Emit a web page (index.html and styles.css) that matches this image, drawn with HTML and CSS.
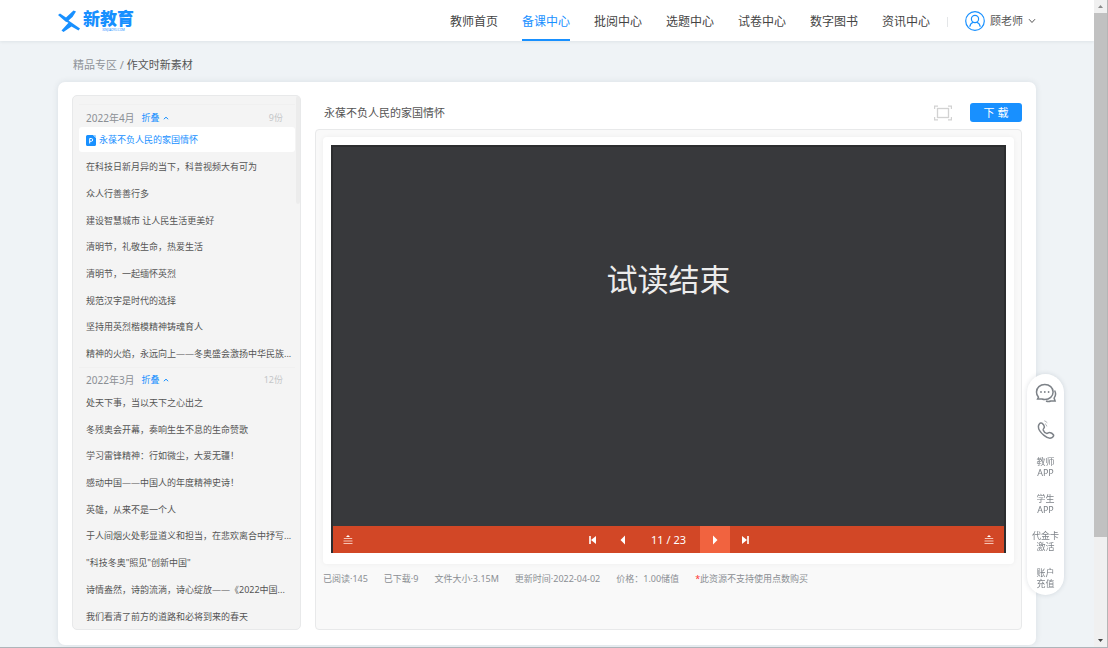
FILE: index.html
```html
<!DOCTYPE html>
<html lang="zh-CN">
<head>
<meta charset="utf-8">
<title>作文时新素材</title>
<link rel="stylesheet" href="styles.css">
</head>
<body>
<div class="page">
  <header class="topbar">
    <a class="logo" href="#">
      <svg class="logo-mark" viewBox="0 0 22 22" aria-hidden="true"><path d="M0 5 2 3.500 8 7.500 15.500.500 18 1.500 14.500 7 10.500 10.500 22 18.500 20.500 20.500 13.500 16.500 5.500 22 3.500 20.500 10.500 12.800 7.500 11.500z" fill="#1890ff"/></svg>
      <span class="logo-text"><b>新教育</b><small>XINJIAOYU.COM</small></span>
    </a>
    <nav class="nav">
      <a href="#">教师首页</a>
      <a href="#" class="active">备课中心</a>
      <a href="#">批阅中心</a>
      <a href="#">选题中心</a>
      <a href="#">试卷中心</a>
      <a href="#">数字图书</a>
      <a href="#">资讯中心</a>
    </nav>
    <button class="user" type="button">
      <svg class="avatar" viewBox="0 0 20 20" aria-hidden="true"><g fill="none" stroke="#1890ff" stroke-width="1.200"><circle cx="10" cy="10" r="9.300"/><circle cx="10" cy="8" r="3.600"/><path d="M4.800 15.800c.3-2.500 1.700-4 3.400-4.600M15.200 15.800c-.3-2.500-1.700-4-3.400-4.600"/></g></svg>
      <span>顾老师</span>
      <svg class="chevron" viewBox="0 0 8 6" aria-hidden="true"><path d="M1 1.200 4 4.500 7 1.200" fill="none" stroke="#555"/></svg>
    </button>
  </header>

  <div class="breadcrumb"><a href="#">精品专区</a> / <span>作文时新素材</span></div>

  <main class="card">
    <aside class="sidebar">
      <div class="group-head"><h2>2022年4月</h2><button type="button">折叠<svg viewBox="0 0 6 4" aria-hidden="true"><path d="M.8 3.200 3 1.200 5.200 3.200" fill="none" stroke="#1890ff"/></svg></button><span>9份</span></div>
      <ul class="docs">
        <li><a href="#" class="current"><svg viewBox="0 0 10 11" aria-hidden="true"><path d="M1.500 0H7l3 3v6.500A1.500 1.500 0 0 1 8.500 11h-7A1.500 1.500 0 0 1 0 9.500v-8A1.500 1.500 0 0 1 1.500 0z" fill="#1890ff"/><path d="M7.500 0 10 2.500V1.200Q10 0 8.800 0z" fill="#8cc8ff"/><path d="M3.700 8.500V3.500H5.300a1.400 1.400 0 0 1 0 2.800H3.700" fill="none" stroke="#fff"/></svg>永葆不负人民的家国情怀</a></li>
        <li><a href="#">在科技日新月异的当下，科普视频大有可为</a></li>
        <li><a href="#">众人行善善行多</a></li>
        <li><a href="#">建设智慧城市 让人民生活更美好</a></li>
        <li><a href="#">清明节，礼敬生命，热爱生活</a></li>
        <li><a href="#">清明节，一起缅怀英烈</a></li>
        <li><a href="#">规范汉字是时代的选择</a></li>
        <li><a href="#">坚持用英烈楷模精神铸魂育人</a></li>
        <li><a href="#">精神的火焰，永远向上——冬奥盛会激扬中华民族...</a></li>
      </ul>
      <div class="group-head"><h2>2022年3月</h2><button type="button">折叠<svg viewBox="0 0 6 4" aria-hidden="true"><path d="M.8 3.200 3 1.200 5.200 3.200" fill="none" stroke="#1890ff"/></svg></button><span>12份</span></div>
      <ul class="docs">
        <li><a href="#">处天下事，当以天下之心出之</a></li>
        <li><a href="#">冬残奥会开幕，奏响生生不息的生命赞歌</a></li>
        <li><a href="#">学习雷锋精神：行如微尘，大爱无疆！</a></li>
        <li><a href="#">感动中国——中国人的年度精神史诗！</a></li>
        <li><a href="#">英雄，从来不是一个人</a></li>
        <li><a href="#">于人间烟火处彰显道义和担当，在悲欢离合中抒写...</a></li>
        <li><a href="#">"科技冬奥"照见"创新中国"</a></li>
        <li><a href="#">诗情盎然，诗韵流淌，诗心绽放——《2022中国...</a></li>
        <li><a href="#">我们看清了前方的道路和必将到来的春天</a></li>
      </ul>
    </aside>

    <section class="content">
      <div class="content-head">
        <h1>永葆不负人民的家国情怀</h1>
        <button class="fullscreen" type="button" aria-label="全屏"><svg viewBox="0 0 18 16"><g fill="none" stroke="#d2d2d2"><rect x="3.500" y="3.500" width="11" height="9" stroke-width="1.300"/><path d="M.6 4V1.100H4M14 1.100h3.400V4M17.400 12v2.900H14M4 14.900H.6V12" stroke-width="1.200"/></g></svg></button>
        <button class="download" type="button">下 载</button>
      </div>
      <div class="panel">
        <div class="stage">
          <div class="viewer">
            <div class="slide">试读结束</div>
            <div class="controls">
              <button type="button" aria-label="目录"><svg viewBox="0 0 10 10"><path d="M5 0 7 2H3z" fill="#fff"/><path d="M.8 3.500h8.400M.5 6h9M.5 8.500h9" stroke="#f6c3b4" stroke-width="1.200"/></svg></button>
              <div class="pager">
                <button type="button" aria-label="首页"><svg viewBox="0 0 10 10"><path d="M2 1v8" stroke="#fff" stroke-width="1.600"/><path d="M8 1v8L3 5z" fill="#fff"/></svg></button>
                <button type="button" aria-label="上一页"><svg viewBox="0 0 10 10"><path d="M7 .500v9L2.500 5z" fill="#fff"/></svg></button>
                <span class="count">11 / 23</span>
                <button type="button" class="lit" aria-label="下一页"><svg viewBox="0 0 10 10"><path d="M3 .500v9L7.500 5z" fill="#fff"/></svg></button>
                <button type="button" aria-label="末页"><svg viewBox="0 0 10 10"><path d="M8 1v8" stroke="#fff" stroke-width="1.600"/><path d="M2 1v8l5-4z" fill="#fff"/></svg></button>
              </div>
              <button type="button" aria-label="菜单"><svg viewBox="0 0 10 10"><path d="M5 0 7 2H3z" fill="#fff"/><path d="M.8 3.500h8.400M.5 6h9M.5 8.500h9" stroke="#f6c3b4" stroke-width="1.200"/></svg></button>
            </div>
          </div>
        </div>
        <div class="meta">
          <span>已阅读·145</span><span>已下载·9</span><span>文件大小·3.15M</span><span>更新时间·2022-04-02</span><span>价格：1.00储值</span><span><em>*</em>此资源不支持使用点数购买</span>
        </div>
      </div>
    </section>
  </main>
</div>

<div class="scrollbar" aria-hidden="true">
  <svg viewBox="0 0 13 13"><path d="M6.500 5 9 8H4z" fill="#8a8a8a"/></svg>
  <div class="thumb"></div>
  <svg viewBox="0 0 13 13"><path d="M4 5h5L6.500 8z" fill="#444"/></svg>
</div>

<div class="tools">
  <button type="button" aria-label="在线咨询"><svg viewBox="0 0 22 22"><g fill="none" stroke="#7d8288" stroke-width="1.500"><path d="M3.500 15.200A7.600 7.200 0 0 1 1.500 10C1.500 5.700 5.100 2.500 9.800 2.500s8.300 3.200 8.300 7.500-3.600 7.500-8.300 7.500c-1 0-2-.2-2.900-.5H2.600z"/><path d="M19.600 8.500c1.400 2.600 1.200 5.400-.5 7.600l1 2.900h-4.300c-1.500.6-3.300.6-4.800 0"/></g><g fill="#7d8288"><circle cx="6" cy="10" r=".9"/><circle cx="9.800" cy="10" r=".9"/><circle cx="13.600" cy="10" r=".9"/></g></svg></button>
  <button type="button" aria-label="电话"><svg viewBox="0 0 22 22"><g fill="none" stroke="#7d8288" stroke-width="1.500"><path d="M4.200 5.200C5 4 6.300 3.600 7.300 4.300 8.600 5.300 9.300 6.800 9.400 8c0 1.200-1.500 1.700-1.200 2.900.5 1.500 2 3 3.500 3.500 1.200.3 1.800-1.200 3-1 1.400.2 2.900 1.200 3.700 2.300.6 1-.3 2.200-1.400 2.900-1.800 1.100-5 .3-8-2.200S3.300 10.200 3.400 7.600c0-.9.300-1.700.8-2.400z"/><path d="M10 4.600c1 .6 1.600 1.600 1.800 2.800M9.300 1.800c1.200.4 2.200 1.100 3 2" stroke="#b0b4b8" stroke-width="1"/></g></svg></button>
  <button type="button">教师<br>APP</button>
  <button type="button">学生<br>APP</button>
  <button type="button">代金卡<br>激活</button>
  <button type="button">账户<br>充值</button>
</div>
</body>
</html>
```
FILE: styles.css
```css
* { box-sizing: border-box; }
body {
  margin: 0;
  display: flex;
  min-height: 100vh;
  background: #eff3f6;
  border-bottom: 1px solid #aeb5ba;
  color: #555;
  font: 11px/16px "Noto Sans", "Noto Sans CJK SC", sans-serif;
}
a { color: inherit; text-decoration: none; }
button { font: inherit; color: inherit; background: none; border: 0; padding: 0; cursor: pointer; }
h1, h2, ul { margin: 0; padding: 0; font-weight: 400; list-style: none; }
svg { display: block; }

.page { flex: 1; min-width: 0; display: flex; flex-direction: column; }

.topbar {
  height: 41px;
  padding: 0 58px;
  display: flex;
  align-items: center;
  background: #fff;
  box-shadow: 0 1px 3px rgba(30, 50, 70, .08);
}
.logo { display: flex; align-items: center; gap: 3px; margin-right: auto; }
.logo-mark { width: 22px; height: 22px; }
.logo-text { display: flex; flex-direction: column; align-items: center; color: #1890ff; }
.logo-text b { font-size: 17px; line-height: 18px; font-weight: 900; }
.logo-text small { font-size: 3px; line-height: 4px; padding-left: 10px; }
.nav { display: flex; align-self: stretch; gap: 24px; font-size: 12px; color: #444; }
.nav a { display: flex; align-items: center; padding-top: 4px; border-bottom: 2px solid transparent; }
.nav .active { color: #1890ff; border-color: #1890ff; }
.user { display: flex; align-items: center; gap: 5px; margin-left: 17px; position: relative; padding-left: 18px; }
.user::before { content: ""; position: absolute; left: 0; top: 6px; height: 10px; border-left: 1px solid #e4e6e8; }
.avatar { width: 20px; height: 20px; }
.chevron { width: 8px; height: 6px; }

.breadcrumb { padding: 16px 73px 9px; color: #909499; }
.breadcrumb span { color: #555; }

.card {
  flex: 1;
  margin: 0 58px 2px;
  padding: 13px 14px 15px;
  display: flex;
  gap: 14px;
  background: #fff;
  border-radius: 7px;
  box-shadow: 0 0 6px rgba(30, 50, 70, .1);
}

.sidebar {
  position: relative;
  flex: 0 0 229px;
  display: flex;
  flex-direction: column;
  padding: 8px 5px 0 6px;
  background: #f4f4f4;
  border: 1px solid #e8e9ea;
  border-radius: 5px;
}
.sidebar::after { content: ""; position: absolute; right: 0; top: 0; width: 4px; height: 108px; border-radius: 2px; background: #ececec; }
.group-head {
  height: 22px;
  padding: 4px 12px 0 7px;
  display: flex;
  align-items: center;
  border-top: 1px solid #f0f0f0;
  color: #8b8f94;
  font-size: 9px;
}
.group-head h2 { font-size: 10px; }
.group-head button { display: flex; align-items: center; gap: 3px; margin-left: 7px; color: #1890ff; }
.group-head svg { width: 6px; height: 4px; }
.group-head span { margin-left: auto; color: #c4c6c8; }
.docs { flex: 1; display: grid; grid-auto-rows: 1fr; font-size: 9px; }
.docs li { display: grid; align-items: center; min-width: 0; }
.docs a { display: flex; align-items: center; gap: 3px; height: 25px; padding: 2px 0 0 7px; border-radius: 3px; white-space: nowrap; overflow: hidden; }
.docs svg { width: 10px; height: 11px; }
.docs .current { background: #fff; color: #1890ff; }

.content { flex: 1; min-width: 0; display: flex; flex-direction: column; padding-top: 8px; }
.content-head { display: flex; align-items: center; padding-left: 9px; margin-bottom: 7px; }
.content-head h1 { font-size: 11px; margin-right: auto; }
.fullscreen svg { width: 18px; height: 16px; }
.download { width: 52px; height: 19px; margin-left: 18px; background: #1890ff; color: #fff; border-radius: 3px; }

.panel {
  flex: 1;
  display: flex;
  flex-direction: column;
  padding: 7px;
  background: #f9f9f9;
  border: 1px solid #e8e9ea;
  border-radius: 4px;
}
.stage { flex: 1; display: flex; padding: 8px 8px 11px; background: #fff; border-radius: 4px; box-shadow: 0 0 5px rgba(0, 0, 0, .05); }
.viewer { flex: 1; display: flex; flex-direction: column; background: #38393c; border: 2px solid #2c2d2f; border-bottom: 0; }
.slide { flex: 1; display: flex; align-items: center; justify-content: center; padding-bottom: 116px; color: #ececec; font-size: 31px; }
.controls { height: 27px; display: flex; justify-content: space-between; background: #d24726; color: #fff; }
.controls button { width: 30px; display: grid; place-items: center; }
.controls svg { width: 10px; height: 10px; }
.pager { display: flex; }
.count { width: 62px; line-height: 27px; text-align: center; }
.controls .lit { background: #f1633f; }

.meta { display: flex; flex-wrap: wrap; gap: 16px; padding: 9px 0 37px; color: #8b8f94; font-size: 9px; line-height: 12px; }
.meta em { color: #f33; font-style: normal; }

.scrollbar { flex: 0 0 14px; display: flex; flex-direction: column; background: #f0f0f0; border-right: 1px solid #b5b5b5; }
.scrollbar svg { width: 13px; height: 13px; }
.thumb { flex: 0 0 81%; margin-bottom: auto; background: #c1c1c1; }

.tools {
  position: fixed;
  right: 44px;
  bottom: 53px;
  width: 37px;
  padding: 8px 0 6px;
  display: flex;
  flex-direction: column;
  align-items: center;
  gap: 15px;
  background: #fff;
  border-radius: 19px;
  box-shadow: 0 0 5px rgba(30, 50, 70, .14);
  color: #7d8288;
  font-size: 9px;
  line-height: 11px;
}
.tools svg { width: 22px; height: 22px; }
```
